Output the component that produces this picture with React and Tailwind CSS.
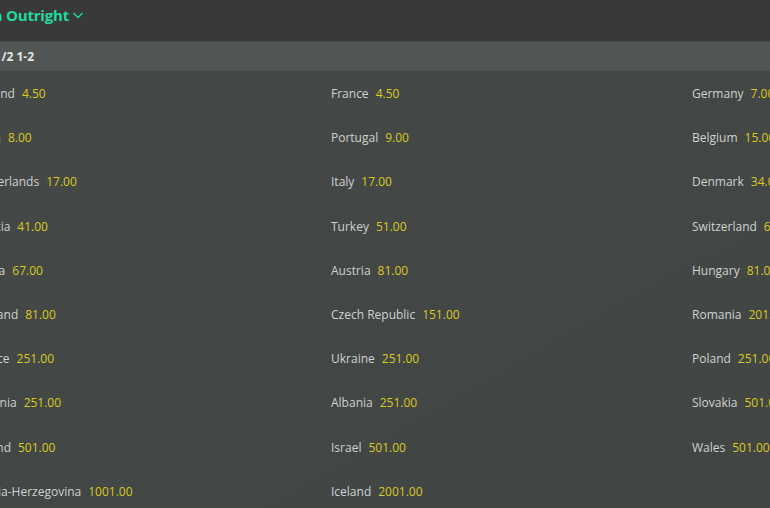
import React from 'react';

const rows = [
    [['England', '4.50'], ['France', '4.50'], ['Germany', '7.00']],
    [['Spain', '8.00'], ['Portugal', '9.00'], ['Belgium', '15.00']],
    [['Netherlands', '17.00'], ['Italy', '17.00'], ['Denmark', '34.00']],
    [['Croatia', '41.00'], ['Turkey', '51.00'], ['Switzerland', '67.00']],
    [['Serbia', '67.00'], ['Austria', '81.00'], ['Hungary', '81.00']],
    [['Scotland', '81.00'], ['Czech Republic', '151.00'], ['Romania', '201.00']],
    [['Greece', '251.00'], ['Ukraine', '251.00'], ['Poland', '251.00']],
    [['Slovenia', '251.00'], ['Albania', '251.00'], ['Slovakia', '501.00']],
    [['Finland', '501.00'], ['Israel', '501.00'], ['Wales', '501.00']],
    [['Bosnia-Herzegovina', '1001.00'], ['Iceland', '2001.00'], null],
];

const App = () => {
    return (
        <div
            className="w-[770px] h-[508px] overflow-hidden bg-[#434846] flex flex-col"
            style={{ fontFamily: '"Open Sans", "Noto Sans", sans-serif' }}
        >
            {/* Market header */}
            <div className="h-[41px] shrink-0 bg-[#393939] flex items-start pt-[4px]">
                <div className="w-[69px] flex justify-end whitespace-nowrap">
                    <span className="text-[15px] leading-[22px] font-bold text-[#22d99c] tracking-[-0.2px]">To Win Outright</span>
                </div>
                <svg className="ml-[3px] mt-[5px] w-[12px] h-[12px] text-[#22d99c]" viewBox="0 0 12 12" fill="none">
                    <path d="M1.5 4L6 8.5L10.5 4" stroke="currentColor" strokeWidth="1.4" />
                </svg>
            </div>

            {/* Each way terms */}
            <div className="h-[30px] shrink-0 bg-[#505654] border-t border-[#474c4a] flex items-center">
                <div className="w-[34px] flex justify-end whitespace-nowrap">
                    <span className="text-[12px] font-bold text-[#e4e6e5]">Each Way 1/2 1-2</span>
                </div>
            </div>

            {/* Selections */}
            <div className="flex-1 bg-gradient-to-br from-[#444947] to-[#414644] pt-[1px]">
                <div className="ml-[-30px] flex flex-col">
                    {rows.map((row, i) => (
                        <div key={i} className="h-[44.2px] grid grid-cols-[361px_361px_361px] items-center">
                            {row.map((cell, j) =>
                                cell ? (
                                    <div key={j} className="flex items-center whitespace-nowrap text-[12px]">
                                        <span className="text-[#cfd2d1]">{cell[0]}</span>
                                        <span className="ml-[7px] text-[#dcc81e]">{cell[1]}</span>
                                    </div>
                                ) : (
                                    <div key={j} />
                                )
                            )}
                        </div>
                    ))}
                </div>
            </div>
        </div>
    );
};

export default App;
